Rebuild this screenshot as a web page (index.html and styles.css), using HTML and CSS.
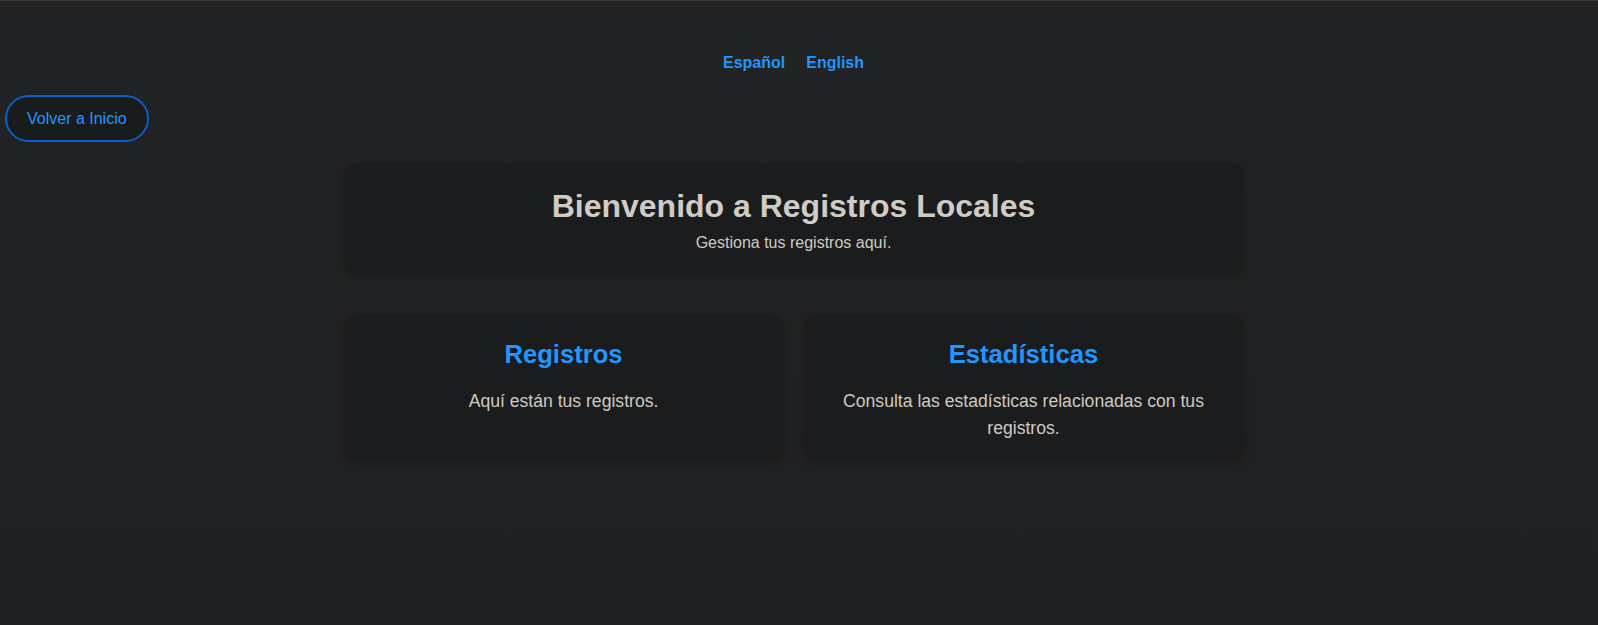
FILE: index.html
```html
<!DOCTYPE html>
<html lang="es">
<head>
<meta charset="utf-8">
<title>Registros Locales</title>
<link rel="stylesheet" href="styles.css">
</head>
<body>
<div class="page">
  <nav class="lang-bar">
    <a class="lang-link" href="#">Español</a>
    <a class="lang-link" href="#">English</a>
  </nav>
  <div class="back-row">
    <button class="back-btn" type="button">Volver a Inicio</button>
  </div>
  <main class="content">
    <section class="welcome card">
      <h1 class="welcome-title">Bienvenido a Registros Locales</h1>
      <p class="welcome-sub">Gestiona tus registros aquí.</p>
    </section>
    <div class="grid">
      <section class="card tile">
        <h2 class="tile-title">Registros</h2>
        <p class="tile-text">Aquí están tus registros.</p>
      </section>
      <section class="card tile">
        <h2 class="tile-title">Estadísticas</h2>
        <p class="tile-text">Consulta las estadísticas relacionadas con tus registros.</p>
      </section>
    </div>
  </main>
</div>
</body>
</html>
```
FILE: styles.css
```css
html, body {
  margin: 0;
  padding: 0;
}
body {
  min-height: 625px;
  box-sizing: border-box;
  border-top: 1px solid #3a3b37;
  background: linear-gradient(180deg, #222325 0%, #1f2122 100%);
  font-family: "Liberation Sans", Arial, sans-serif;
  color: #cfcbc4;
}
.page {
  padding-right: 11px;
}
.lang-bar {
  display: flex;
  justify-content: center;
  gap: 21px;
  padding-top: 53px;
  line-height: 18px;
}
.lang-link {
  color: #2196ff;
  font-weight: bold;
  font-size: 16px;
  text-decoration: none;
}
.back-row {
  display: flex;
  margin-top: 23px;
  padding-left: 5px;
}
.back-btn {
  font-family: "Liberation Sans", Arial, sans-serif;
  font-size: 16px;
  line-height: 19px;
  color: #2196ff;
  background: #1a1b1d;
  border: 2px solid #0b5ec9;
  border-radius: 24px;
  padding: 12px 20px;
  cursor: pointer;
}
.content {
  width: 900px;
  margin: 21px auto 0;
}
.card {
  background: #1b1c1e;
  border-radius: 12px;
  box-shadow: 0 2px 8px rgba(0, 0, 0, 0.18);
}
.welcome {
  text-align: center;
  padding: 25px 20px 22px;
}
.welcome-title {
  margin: 0;
  font-size: 32px;
  font-weight: bold;
  color: #d0ccc5;
}
.welcome-sub {
  margin: 9px 0 0;
  font-size: 16px;
  color: #cfcac2;
}
.grid {
  display: grid;
  grid-template-columns: 1fr 1fr;
  gap: 20px;
  margin-top: 41px;
}
.tile {
  text-align: center;
  padding: 25px 20px 19px;
}
.tile-title {
  margin: 0 0 19px;
  font-size: 25.6px;
  font-weight: bold;
  color: #2196ff;
}
.tile-text {
  margin: 0;
  font-size: 17.6px;
  line-height: 27px;
  color: #cfcac2;
}
```
